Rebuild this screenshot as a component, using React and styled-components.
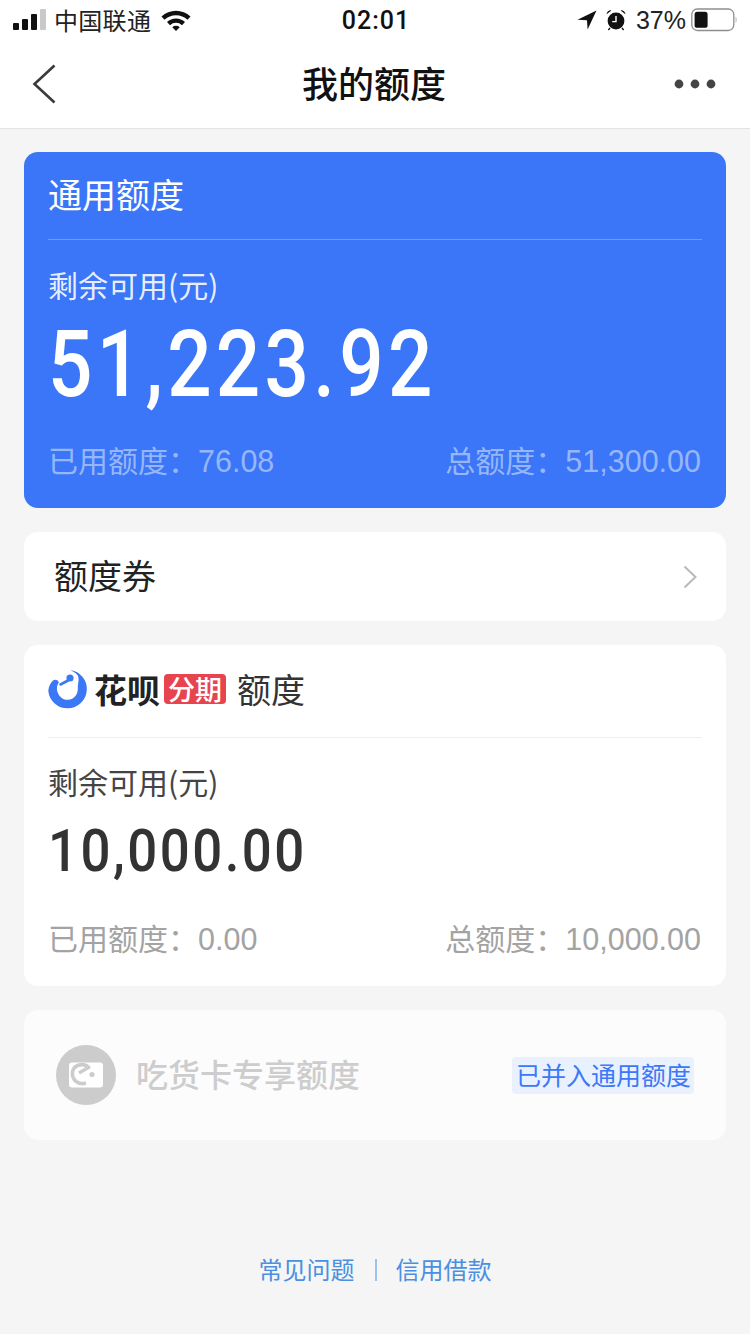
import React from "react";
import styled, { createGlobalStyle } from "styled-components";

const CJK = `"Noto Sans CJK SC", "Liberation Sans", sans-serif`;
const NUM = `"Liberation Sans", "Noto Sans CJK SC", sans-serif`;

const Global = createGlobalStyle`
  html, body { margin: 0; padding: 0; background: #f5f5f5; }
  body { width: 750px; height: 1334px; overflow: hidden; font-family: ${CJK}; }
`;

const Page = styled.div`
  width: 750px;
  height: 1334px;
  display: flex;
  flex-direction: column;
  background: #f5f5f5;
`;

// > 상단 영역
const Header = styled.header`
  background: #fff;
  border-bottom: 1px solid #e4e4e4;
  height: 129px;
  box-sizing: border-box;
`;
const StatusBar = styled.div`
  height: 40px;
  display: grid;
  grid-template-columns: 1fr auto 1fr;
  align-items: center;
  padding: 0 13px;
  color: #111;
`;
const StatusSide = styled.div`
  display: flex;
  align-items: center;
  justify-content: ${(p) => (p.$end ? "flex-end" : "flex-start")};
`;
const Carrier = styled.span`
  font-size: 24px;
  line-height: 40px;
  letter-spacing: 0.3px;
  margin: 0 10px 0 8px;
  color: #222;
`;
const Clock = styled.span`
  font-family: "Roboto", sans-serif;
  font-size: 25px;
  font-weight: 500;
  letter-spacing: 1px;
  margin-left: 2px;
`;
const Percent = styled.span`
  font-family: ${NUM};
  font-size: 25px;
  margin: 0 5px 0 10px;
  color: #222;
`;
const NavBar = styled.div`
  height: 88px;
  display: grid;
  grid-template-columns: 1fr auto 1fr;
  align-items: center;
  padding: 0 34px 0 32px;
`;
const NavEnd = styled.div`
  display: flex;
  justify-content: flex-end;
`;
const NavTitle = styled.h1`
  margin: 0 0 4px;
  font-size: 36px;
  font-weight: 500;
  color: #111;
  line-height: 50px;
`;

const Content = styled.main`
  flex: 1;
  display: flex;
  flex-direction: column;
  gap: 24px;
  padding: 23px 24px 0;
`;
const Card = styled.section`
  background: ${(p) => p.$bg || "#fff"};
  border-radius: 14px;
`;
const QuotaCard = styled(Card)`
  height: ${(p) => p.$h}px;
  padding: 0 24px;
  box-sizing: border-box;
  display: flex;
  flex-direction: column;
`;
const CardTitle = styled.div`
  height: ${(p) => (p.$light ? 88 : 93)}px;
  box-sizing: border-box;
  padding-bottom: ${(p) => (p.$light ? 4 : 5)}px;
  display: flex;
  align-items: center;
  gap: 11px;
  font-size: 34px;
  color: ${(p) => (p.$light ? "#fff" : "#333")};
  border-bottom: 1px solid ${(p) => (p.$light ? "rgba(255,255,255,.28)" : "#eeeeee")};
  flex-shrink: 0;
`;
const Label = styled.div`
  font-size: 30px;
  line-height: 40px;
  margin-top: ${(p) => (p.$light ? 24 : 23)}px;
  color: ${(p) => (p.$light ? "rgba(255,255,255,.9)" : "#444")};
`;
const BigAmount = styled.div`
  font-family: "Roboto", sans-serif;
  font-weight: 500;
  font-size: 92px;
  line-height: 100px;
  margin: 11px 0 0 0;
  letter-spacing: 5px;
  transform: scaleX(0.85);
  transform-origin: left center;
  white-space: nowrap;
  color: #fff;
`;
const Amount = styled.div`
  font-family: "Roboto", sans-serif;
  font-weight: 500;
  font-size: 60px;
  line-height: 70px;
  margin: 15px 0 0 0;
  letter-spacing: 2.8px;
  transform: scaleX(0.88);
  transform-origin: left center;
  white-space: nowrap;
  color: #333;
`;
const Footnotes = styled.div`
  display: flex;
  justify-content: space-between;
  margin-top: ${(p) => p.$top}px;
  padding: 0 1px 0 0;
  font-size: 30px;
  line-height: 42px;
  color: ${(p) => (p.$light ? "rgba(255,255,255,.48)" : "#a3a3a3")};
`;
const NoteValue = styled.span`
  font-family: ${NUM};
  font-size: 30.5px;
`;

const CouponRow = styled(Card)`
  height: 89px;
  box-sizing: border-box;
  display: flex;
  align-items: center;
  justify-content: space-between;
  padding: 0 29px 0 30px;
  font-size: 34px;
  color: #222;
`;
const CouponName = styled.span`
  margin-bottom: 4px;
`;

const Brand = styled.span`
  font-weight: 700;
  font-size: 33px;
  color: #222;
  margin-left: -4px;
`;
const BrandBadge = styled.span`
  background: #e8444f;
  color: #fff;
  border-radius: 4px;
  font-size: 27px;
  font-weight: 500;
  line-height: 30px;
  padding: 0 4px;
  margin-left: -7px;
`;

const SnackCard = styled(Card)`
  height: 130px;
  background: #fcfcfc;
  display: flex;
  align-items: center;
  padding: 0 32px;
`;
const SnackIcon = styled.div`
  width: 60px;
  height: 60px;
  border-radius: 50%;
  background: #cccccc;
  display: flex;
  align-items: center;
  justify-content: center;
`;
const SnackName = styled.div`
  flex: 1;
  margin: 0 0 4px 20px;
  font-size: 32px;
  font-weight: 500;
  color: #cdcdcd;
`;
const MergedTag = styled.span`
  background: #e9f1fe;
  color: #3c78f7;
  border-radius: 4px;
  font-size: 25px;
  line-height: 34px;
  padding: 0 3px 3px 4px;
`;

const Links = styled.footer`
  display: flex;
  justify-content: center;
  align-items: center;
  margin-top: 87px;
  font-size: 24px;
  line-height: 36px;
  color: #4a90e2;
`;
const Divider = styled.span`
  width: 2px;
  height: 22px;
  background: #9cc3ee;
  margin: 2px 19px 0 20px;
`;

const Signal = () => (
  <svg width="33" height="22" viewBox="0 0 33 22">
    <rect x="0" y="14" width="6" height="7" rx="1" fill="#111" />
    <rect x="9" y="10" width="6" height="11" rx="1" fill="#111" />
    <rect x="18" y="5" width="6" height="16" rx="1" fill="#111" />
    <rect x="27" y="0" width="6" height="21" rx="1" fill="#c9c9c9" />
  </svg>
);

const Wifi = () => (
  <svg width="30" height="22" viewBox="0 0 30 22">
    <path d="M0.5 7.5 A21 21 0 0 1 29.5 7.5 L26.5 10.8 A16.6 16.6 0 0 0 3.5 10.8 Z" fill="#111" />
    <path d="M6 13 A13 13 0 0 1 24 13 L21 16.2 A8.8 8.8 0 0 0 9 16.2 Z" fill="#111" />
    <path d="M11.3 18.3 A5.4 5.4 0 0 1 18.7 18.3 L15 22 Z" fill="#111" />
  </svg>
);

const Location = () => (
  <svg width="20" height="20" viewBox="0 0 20 20">
    <path d="M19.5 0.5 L0.5 9.8 L10 10.2 L10.6 19.5 Z" fill="#111" />
  </svg>
);

const Alarm = () => (
  <svg width="20" height="22" viewBox="0 0 20 22" style={{ marginLeft: 9 }}>
    <circle cx="10" cy="12" r="8.4" fill="#111" />
    <path d="M10 7 V12.6 H6.2" stroke="#fff" strokeWidth="1.4" fill="none" />
    <path d="M0.6 5.2 A4 4 0 0 1 5.4 1.4 Z M19.4 5.2 A4 4 0 0 0 14.6 1.4 Z" fill="#111" />
    <path d="M4 19 L2.4 21 M16 19 L17.6 21" stroke="#111" strokeWidth="1.4" />
  </svg>
);

const Battery = () => (
  <svg width="46" height="24" viewBox="0 0 46 24">
    <rect x="0.8" y="1" width="42" height="21.5" rx="5.5" fill="none" stroke="#8e8e8e" strokeWidth="1.3" />
    <rect x="3.6" y="3.8" width="13" height="16" rx="2.6" fill="#111" />
    <path d="M44.6 8.6 C45.9 9.2 45.9 14.3 44.6 14.9 Z" fill="#a8a8a8" />
  </svg>
);

const Back = () => (
  <svg width="24" height="40" viewBox="0 0 24 40">
    <path d="M22.5 1.5 L2.5 20 L22.5 38.5" fill="none" stroke="#3a3a3a" strokeWidth="2.6" />
  </svg>
);

const More = () => (
  <svg width="42" height="10" viewBox="0 0 42 10">
    <circle cx="5" cy="5" r="4.4" fill="#444" />
    <circle cx="21" cy="5" r="4.4" fill="#444" />
    <circle cx="37" cy="5" r="4.4" fill="#444" />
  </svg>
);

const Chevron = () => (
  <svg width="14" height="24" viewBox="0 0 14 24">
    <path d="M1.5 1.5 L12.5 12 L1.5 22.5" fill="none" stroke="#b9b9b9" strokeWidth="2" />
  </svg>
);

const HuabeiLogo = () => (
  <svg width="39" height="40" viewBox="4 3 39 40">
    <path
      d="M26.5 4 A19.3 19.3 0 1 1 4.3 25 C4.6 20.5 6.5 17 9 14.6 C11.2 12.8 14.6 14 14.8 16.8 C13 19 12.6 22 13.2 25 C14.6 31 20 35 26 33.5 C31.5 32 34.2 27 33.8 21 C33.8 17 36 12 33 8.5 C31 6.4 28.5 5.2 26.5 4 Z"
      fill="#3b78f6"
    />
    <path d="M16.5 18.5 L24 14.5" stroke="#3b78f6" strokeWidth="2.6" strokeLinecap="round" />
    <circle cx="26" cy="12" r="3.6" fill="#3b78f6" />
  </svg>
);

const SnackGlyph = () => (
  <svg width="36" height="26" viewBox="0 0 36 26">
    <rect x="1" y="0.5" width="34" height="25" rx="3" fill="#fff" />
    <path
      d="M20 4.5 C14 0.5 5.5 3.5 4.5 10 C3.5 17 9.5 23.5 18 21"
      fill="none"
      stroke="#cccccc"
      strokeWidth="3.6"
    />
    <path d="M11 11 L22 4.5" stroke="#cccccc" strokeWidth="3.4" />
    <circle cx="24" cy="12.5" r="2.6" fill="#cccccc" />
  </svg>
);

const Footnote = ({ light, top, used, total }) => (
  <Footnotes $light={light} $top={top}>
    <span>
      已用额度：<NoteValue>{used}</NoteValue>
    </span>
    <span>
      总额度：<NoteValue>{total}</NoteValue>
    </span>
  </Footnotes>
);

function App() {
  return (
    <Page>
      <Global />
      <Header>
        <StatusBar>
          <StatusSide>
            <Signal />
            <Carrier>中国联通</Carrier>
            <Wifi />
          </StatusSide>
          <Clock>02:01</Clock>
          <StatusSide $end>
            <Location />
            <Alarm />
            <Percent>37%</Percent>
            <Battery />
          </StatusSide>
        </StatusBar>
        <NavBar>
          <Back />
          <NavTitle>我的额度</NavTitle>
          <NavEnd>
            <More />
          </NavEnd>
        </NavBar>
      </Header>
      <Content>
        <QuotaCard $bg="#3a76f7" $h={356}>
          <CardTitle $light>通用额度</CardTitle>
          <Label $light>剩余可用(元)</Label>
          <BigAmount>51,223.92</BigAmount>
          <Footnote light top={23} used="76.08" total="51,300.00" />
        </QuotaCard>
        <CouponRow>
          <CouponName>额度券</CouponName>
          <Chevron />
        </CouponRow>
        <QuotaCard $h={341}>
          <CardTitle>
            <HuabeiLogo />
            <Brand>花呗</Brand>
            <BrandBadge>分期</BrandBadge>
            额度
          </CardTitle>
          <Label>剩余可用(元)</Label>
          <Amount>10,000.00</Amount>
          <Footnote top={30} used="0.00" total="10,000.00" />
        </QuotaCard>
        <SnackCard>
          <SnackIcon>
            <SnackGlyph />
          </SnackIcon>
          <SnackName>吃货卡专享额度</SnackName>
          <MergedTag>已并入通用额度</MergedTag>
        </SnackCard>
        <Links>
          <span>常见问题</span>
          <Divider />
          <span>信用借款</span>
        </Links>
      </Content>
    </Page>
  );
}

export default App;
